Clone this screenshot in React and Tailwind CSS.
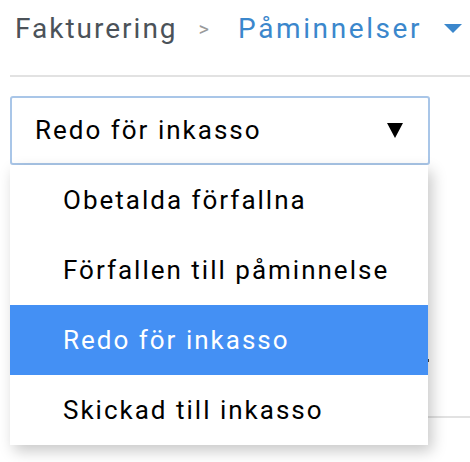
import { useState } from "react";

const options = [
  "Obetalda förfallna",
  "Förfallen till påminnelse",
  "Redo för inkasso",
  "Skickad till inkasso",
];

export default function App() {
  const [selected, setSelected] = useState("Redo för inkasso");

  return (
    <div className="w-[470px] h-[462px] bg-white overflow-hidden font-['Roboto',sans-serif]">
      {/* Breadcrumb */}
      <div className="flex items-center h-[54px] pl-[15px] pt-[3px]">
        <span className="text-[28px] text-[#4b5259] tracking-[2px]">Fakturering</span>
        <span className="ml-[21px] text-[20px] text-[#9a9a9a]">&gt;</span>
        <span className="ml-[29px] text-[28px] text-[#3b87cc] tracking-[2.6px]">Påminnelser</span>
        <svg className="ml-[22px] shrink-0" width="18" height="9" viewBox="0 0 18 9">
          <path d="M0 0H18L9 9Z" fill="#3b87cc" />
        </svg>
      </div>

      <div className="ml-[10px] mt-[21px] h-[2px] bg-[#e2e2e2]" />

      <div className="relative px-[10px] pt-[19px]">
        {/* Select */}
        <div className="w-[420px] h-[69px] border-2 border-[#a9c6e8] rounded-[3px] flex items-center justify-between pl-[23px] pr-[25px]">
          <span className="text-[26px] text-black tracking-[2px]">{selected}</span>
          <svg width="16" height="15" viewBox="0 0 16 15">
            <path d="M0 0H16L8 15Z" fill="#000" />
          </svg>
        </div>

        {/* Content behind the menu */}
        <div className="relative h-[300px]">
          <span className="absolute left-[417px] top-[194px] w-[2px] h-[3px] bg-[#444]" />
          <div className="absolute left-[418px] right-[-10px] top-[251px] h-[2px] bg-[#e2e2e2]" />

          {/* Menu */}
          <ul className="absolute left-0 top-0 w-[418px] bg-white shadow-[4px_6px_14px_rgba(0,0,0,0.22)]">
            {options.map((opt) => (
              <li
                key={opt}
                onClick={() => setSelected(opt)}
                className={
                  opt === selected
                    ? "h-[70px] flex items-center pl-[53px] bg-[#4490f4] text-white text-[26px] tracking-[2px]"
                    : "h-[70px] flex items-center pl-[53px] text-black text-[26px] tracking-[2px]"
                }
              >
                {opt}
              </li>
            ))}
          </ul>
        </div>
      </div>
    </div>
  );
}
